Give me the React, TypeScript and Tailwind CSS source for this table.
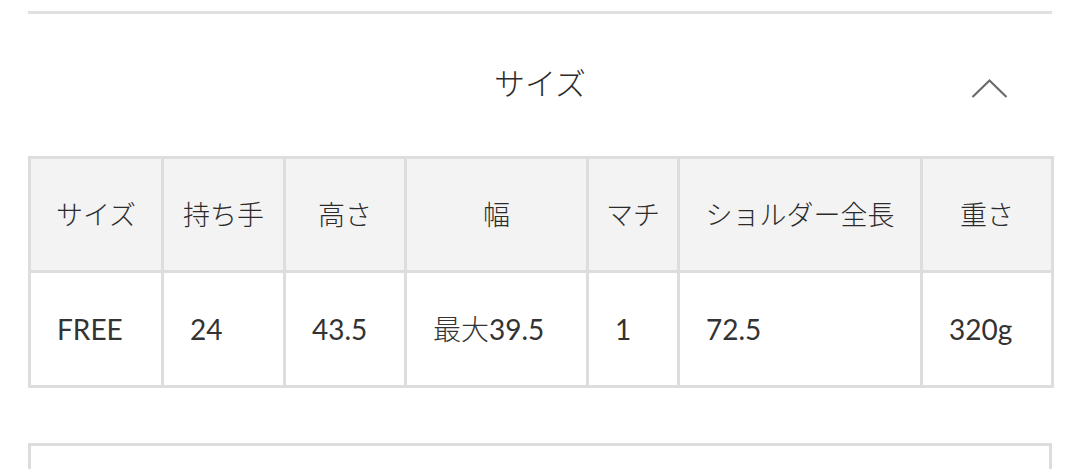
import React from "react";

const cols: { h: string; v: React.ReactNode; w: number }[] = [
  { h: "サイズ", v: "FREE", w: 133 },
  { h: "持ち手", v: "24", w: 122 },
  { h: "高さ", v: "43.5", w: 121 },
  {
    h: "幅",
    v: (
      <>
        <span className="font-light">最大</span>39.5
      </>
    ),
    w: 182,
  },
  { h: "マチ", v: "1", w: 91 },
  { h: "ショルダー全長", v: "72.5", w: 243 },
  { h: "重さ", v: "320g", w: 131 },
];

export default function App() {
  return (
    <div
      className="w-[1080px] h-[469px] overflow-hidden bg-white text-[#333]"
      style={{ fontFamily: '"Lato", "Noto Sans CJK JP", sans-serif' }}
    >
      <div className="px-[28px] pt-[11px]">
        <div className="h-[3px] bg-[#e0e0e0]" />
        <div className="relative h-[142px] flex items-center justify-center">
          <span className="text-[31px] font-light leading-none -mt-[4px] text-[#2b2b2b]">サイズ</span>
          <svg
            className="absolute right-[44px] top-[64px]"
            width="37"
            height="21"
            viewBox="0 0 37 21"
            fill="none"
          >
            <path d="M1.5 19 L18.5 2.5 L35.5 19" stroke="#6b6b6b" strokeWidth="2.2" />
          </svg>
        </div>
        <table className="table-fixed border-collapse w-[1023px]">
          <colgroup>
            {cols.map((c, i) => (
              <col key={i} style={{ width: c.w }} />
            ))}
          </colgroup>
          <tbody>
            <tr className="h-[114px] bg-[#f3f3f3]">
              {cols.map((c, i) => (
                <td
                  key={i}
                  className="border-[3px] border-[#dddddd] text-center text-[27px] font-light leading-none p-0 text-[#2b2b2b]"
                >
                  {c.h}
                </td>
              ))}
            </tr>
            <tr className="h-[115px] bg-white">
              {cols.map((c, i) => (
                <td
                  key={i}
                  className="border-[3px] border-[#dddddd] text-left text-[28px] leading-none pl-[26px] pr-0 py-0"
                >
                  {c.v}
                </td>
              ))}
            </tr>
          </tbody>
        </table>
        <div className="mt-[55px] h-[60px] border-[3px] border-[#dddddd]" />
      </div>
    </div>
  );
}
